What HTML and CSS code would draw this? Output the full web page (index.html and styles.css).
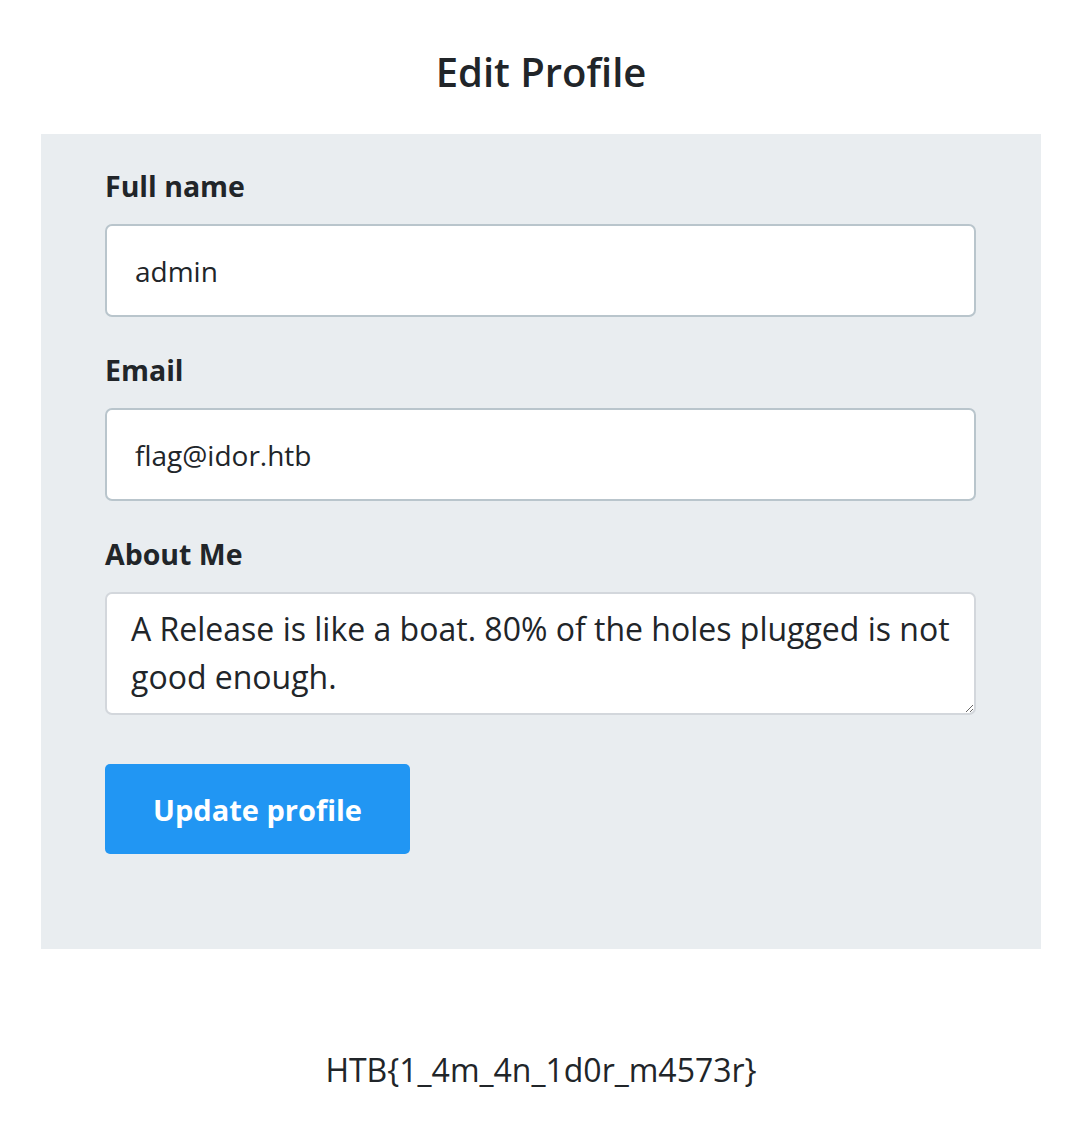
FILE: index.html
```html
<!DOCTYPE html>
<html lang="en">
<head>
<meta charset="utf-8">
<title>Edit Profile</title>
<link rel="stylesheet" href="styles.css">
</head>
<body>
<div class="page">
  <h1 class="title">Edit Profile</h1>
  <div class="panel">
    <form class="form">
      <div class="group">
        <label class="label" for="name">Full name</label>
        <input class="field" id="name" type="text" value="admin">
      </div>
      <div class="group">
        <label class="label" for="email">Email</label>
        <input class="field" id="email" type="text" value="flag@idor.htb">
      </div>
      <div class="group">
        <label class="label" for="about">About Me</label>
        <textarea class="area" id="about">A Release is like a boat. 80% of the holes plugged is not good enough.</textarea>
      </div>
      <button class="btn" type="button">Update profile</button>
    </form>
  </div>
  <p class="flag">HTB{1_4m_4n_1d0r_m4573r}</p>
</div>
</body>
</html>
```
FILE: styles.css
```css
html, body {
  margin: 0;
  padding: 0;
  background: #ffffff;
}
body {
  font-family: "Open Sans", "Liberation Sans", sans-serif;
  color: #212529;
}
.page {
  width: 1000px;
  margin-left: 41px;
}
.title {
  margin: 48px 0 38px;
  font-size: 40px;
  line-height: 48px;
  font-weight: 600;
  text-align: center;
  color: #212529;
}
.panel {
  background: #e9edf0;
  padding: 32px 65px 95px 64px;
}
.form {
  display: flex;
  flex-direction: column;
  align-items: flex-start;
}
.group {
  display: flex;
  flex-direction: column;
  width: 100%;
  margin-bottom: 33px;
}
.group:nth-child(3) {
  margin-bottom: 49px;
}
.label {
  font-size: 28.5px;
  line-height: 40px;
  font-weight: 700;
  color: #212529;
  margin-bottom: 18px;
}
.field {
  box-sizing: border-box;
  width: 100%;
  height: 93px;
  margin: 0;
  padding: 0 28px;
  border: 2px solid #b9c5cc;
  border-radius: 7px;
  background: #ffffff;
  font-family: "Open Sans", "Liberation Sans", sans-serif;
  font-size: 28px;
  color: #212529;
  outline: none;
}
.area {
  display: block;
  box-sizing: border-box;
  width: 100%;
  height: 123px;
  margin: 0;
  padding: 11px 20px 11px 24px;
  border: 2px solid #d3d7dc;
  border-radius: 7px;
  background: #ffffff;
  font-family: "Open Sans", "Liberation Sans", sans-serif;
  font-size: 32px;
  line-height: 48px;
  color: #212529;
  outline: none;
  resize: vertical;
}
.btn {
  box-sizing: border-box;
  width: 305px;
  height: 90px;
  margin: 0;
  border: none;
  border-radius: 5px;
  background: #2196f3;
  color: #ffffff;
  font-family: "Open Sans", "Liberation Sans", sans-serif;
  font-size: 29px;
  font-weight: 700;
  cursor: pointer;
}
.flag {
  margin: 99px 0 0;
  font-size: 32px;
  line-height: 44px;
  text-align: center;
  color: #212529;
}
```
